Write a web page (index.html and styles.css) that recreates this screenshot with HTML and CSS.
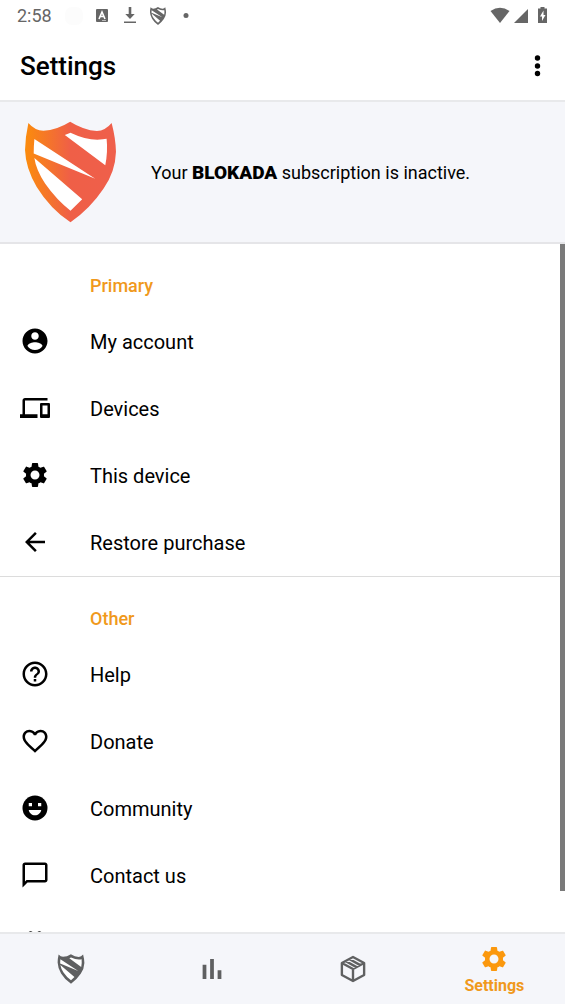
FILE: index.html
```html
<!DOCTYPE html>
<html lang="en">
<head>
<meta charset="utf-8">
<meta name="viewport" content="width=device-width, initial-scale=1">
<title>Settings</title>
<link rel="stylesheet" href="styles.css">
</head>
<body>
<svg class="defs" aria-hidden="true">
  <defs>
    <linearGradient id="flame" x1="0" x2="1" y1="0" y2="0">
      <stop offset="0" stop-color="#fb8c0c"/>
      <stop offset="0.5" stop-color="#ef5f47"/>
      <stop offset="1" stop-color="#ef5f4b"/>
    </linearGradient>
    <symbol id="shield" viewBox="73 63 276 305">
      <path d="M85 69Q105 92 130 92Q170 90 210 65Q250 90 290 93Q315 92 334 69Q346 115 347 155Q345 215 310 265Q270 325 211 366Q150 325 110 260Q77 205 75 150Q76 110 85 69Z"/>
      <path fill="#fff" d="M103 117L285 236L101 160Q101 138 103 117ZM103 174L246 297L211 331Q170 300 135 250Q108 210 103 174ZM194 105L211 98Q255 119 291 119Q310 118 319 116Q323 155 315 195Z"/>
    </symbol>
    <symbol id="gear" viewBox="0 0 24 24">
      <path d="M19.14 12.94c.04-.3.06-.61.06-.94 0-.32-.02-.64-.07-.94l2.03-1.58c.18-.14.23-.41.12-.61l-1.92-3.32c-.12-.22-.37-.29-.59-.22l-2.39.96c-.5-.38-1.03-.7-1.62-.94l-.36-2.54c-.04-.24-.24-.41-.48-.41h-3.84c-.24 0-.43.17-.47.41l-.36 2.54c-.59.24-1.13.57-1.62.94l-2.39-.96c-.22-.08-.47 0-.59.22L2.74 8.87c-.12.21-.08.47.12.61l2.03 1.58c-.05.3-.09.63-.09.94s.02.64.07.94l-2.03 1.58c-.18.14-.23.41-.12.61l1.92 3.32c.12.22.37.29.59.22l2.39-.96c.5.38 1.03.7 1.62.94l.36 2.54c.05.24.24.41.48.41h3.84c.24 0 .44-.17.47-.41l.36-2.54c.59-.24 1.13-.56 1.62-.94l2.39.96c.22.08.47 0 .59-.22l1.92-3.32c.12-.22.07-.47-.12-.61l-2.01-1.58zM12 15.6c-1.98 0-3.6-1.62-3.6-3.6s1.62-3.6 3.6-3.6 3.6 1.62 3.6 3.6-1.62 3.6-3.6 3.6z"/>
    </symbol>
  </defs>
</svg>
<div class="screen">
  <div class="status">
    <div class="status-group">
      <span class="clock">2:58</span>
      <svg class="status-icon faint" viewBox="0 0 18 18"><rect width="18" height="18" rx="7"/></svg>
      <svg class="status-icon" viewBox="0 0 18 18"><rect x="3" y="2" width="12" height="13" rx="1"/><path d="M6 12L9 5L12 12M7 9.500H11" fill="none" stroke="#fff" stroke-width="1.600"/><path d="M9 13.500h4" stroke="#bbb"/></svg>
      <svg class="status-icon" viewBox="0 0 18 18"><path d="M7.700 0h2.600v7h3.400L9 12 4.300 7h3.400zM3 14.500h12V16H3z"/></svg>
      <svg class="status-icon"><use href="#shield"/></svg>
      <svg class="status-icon" viewBox="0 0 18 18"><circle cx="9" cy="8.500" r="2.500"/></svg>
    </div>
    <div class="status-group right">
      <svg class="status-glyph" viewBox="0 0 20 18"><path d="M.5 4Q10-2.500 19.500 4L10 16z"/></svg>
      <svg class="status-glyph" viewBox="0 0 20 18"><path d="M17 2V16H3z"/></svg>
      <svg class="status-glyph" viewBox="0 0 20 18"><path d="M8.500 0h4v1.500H15V16H6V1.500h2.500z"/><path fill="#fff" d="M11.500 3.500L8 9.500h2V14l3.500-6h-2z"/></svg>
    </div>
  </div>
  <header class="topbar">
    <h1>Settings</h1>
    <button class="more" type="button" aria-label="More options"><svg viewBox="0 0 10 22"><circle cx="5" cy="3" r="2.700"/><circle cx="5" cy="11" r="2.700"/><circle cx="5" cy="18.500" r="2.700"/></svg></button>
  </header>
  <section class="banner">
    <svg class="logo" fill="url(#flame)"><use href="#shield"/></svg>
    <p>Your <strong>BLOKADA</strong> subscription is inactive.</p>
  </section>
  <main class="content">
    <section class="group">
      <h2>Primary</h2>
      <a class="row" href="#account"><svg viewBox="0 0 24 24"><path d="M12 2C6.480 2 2 6.480 2 12s4.480 10 10 10 10-4.480 10-10S17.520 2 12 2zm0 3c1.660 0 3 1.340 3 3s-1.340 3-3 3-3-1.340-3-3 1.340-3 3-3zm0 14.200c-2.500 0-4.710-1.280-6-3.220.03-1.990 4-3.080 6-3.080 1.990 0 5.970 1.090 6 3.080-1.290 1.940-3.500 3.220-6 3.220z"/></svg><span>My account</span></a>
      <a class="row" href="#devices"><svg viewBox="0 0 24 24"><path d="M4 6h18V4H4c-1.100 0-2 .9-2 2v11H0v3h14v-3H4V6zm19 2h-6c-.55 0-1 .45-1 1v10c0 .55.45 1 1 1h6c.55 0 1-.45 1-1V9c0-.55-.45-1-1-1zm-1 9h-4v-7h4v7z"/></svg><span>Devices</span></a>
      <a class="row" href="#device"><svg><use href="#gear"/></svg><span>This device</span></a>
      <a class="row" href="#restore"><svg viewBox="0 0 24 24"><path d="M20 11H7.830l5.590-5.590L12 4l-8 8 8 8 1.410-1.410L7.830 13H20v-2z"/></svg><span>Restore purchase</span></a>
    </section>
    <section class="group">
      <h2>Other</h2>
      <a class="row" href="#help"><svg viewBox="0 0 24 24"><path d="M11 18h2v-2h-2v2zm1-16C6.480 2 2 6.480 2 12s4.480 10 10 10 10-4.480 10-10S17.520 2 12 2zm0 18c-4.410 0-8-3.590-8-8s3.590-8 8-8 8 3.590 8 8-3.590 8-8 8zm0-14c-2.210 0-4 1.790-4 4h2c0-1.100.9-2 2-2s2 .9 2 2c0 2-3 1.750-3 5h2c0-2.250 3-2.500 3-5 0-2.210-1.790-4-4-4z"/></svg><span>Help</span></a>
      <a class="row" href="#donate"><svg viewBox="0 0 24 24"><path d="M16.500 3c-1.740 0-3.410.81-4.500 2.090C10.910 3.810 9.240 3 7.500 3 4.420 3 2 5.420 2 8.500c0 3.780 3.400 6.860 8.550 11.540L12 21.350l1.450-1.320C18.600 15.360 22 12.280 22 8.500 22 5.420 19.580 3 16.500 3zm-4.400 15.550l-.1.100-.1-.1C7.140 14.240 4 11.390 4 8.500 4 6.500 5.500 5 7.500 5c1.540 0 3.040.99 3.570 2.360h1.870C13.460 5.990 14.960 5 16.500 5c2 0 3.500 1.500 3.500 3.500 0 2.890-3.140 5.740-7.900 10.050z"/></svg><span>Donate</span></a>
      <a class="row" href="#community"><svg viewBox="0 0 24 24"><circle cx="12" cy="12" r="10"/><path fill="#fff" d="M7 8h2.600v2.600H7zM14.400 8H17v2.600h-2.600zM7 13.500h10c-.5 2.500-2.500 4.300-5 4.300s-4.500-1.800-5-4.300z"/></svg><span>Community</span></a>
      <a class="row" href="#contact"><svg viewBox="0 0 24 24"><path d="M20 2H4c-1.100 0-2 .9-2 2v18l4-4h14c1.100 0 2-.9 2-2V4c0-1.100-.9-2-2-2zm0 14H5.200L4 17.200V4h16v12z"/></svg><span>Contact us</span></a>
      <a class="row" href="#about" aria-label="About"><svg viewBox="0 0 24 24"><path d="M6 8V5Q8.500 1.800 11 5V8zM13 8V5Q15.500 1.800 18 5V8z"/></svg></a>
    </section>
    <div class="scrollbar"></div>
  </main>
  <nav class="tabs" aria-label="Main">
    <a href="#home" aria-label="Home"><svg class="tab-shield"><use href="#shield"/></svg></a>
    <a href="#activity" aria-label="Activity"><svg viewBox="0 0 24 24"><path d="M4.500 8.500h3V20h-3zM10.500 4h3v16h-3zM16.500 13h3v7h-3z"/></svg></a>
    <a href="#packs" aria-label="Packs"><svg viewBox="0 0 24 24" fill="none" stroke="#5f6061" stroke-width="1.900" stroke-linejoin="round"><path d="M12 2.400L20.900 7.200V16.800L12 21.600L3.100 16.800V7.200zM3.100 7.200L12 12L20.900 7.200M12 12V21.600M6 5.600L14.800 10.500M9 4L17.800 8.900"/></svg></a>
    <a class="active" href="#settings" aria-current="page"><svg><use href="#gear"/></svg><span>Settings</span></a>
  </nav>
</div>
</body>
</html>
```
FILE: styles.css
```css
* { box-sizing: border-box; }
body { margin: 0; background: #fff; color: #000; font-family: Roboto, sans-serif; }
h1, h2, p { margin: 0; }
a { color: inherit; text-decoration: none; }
.defs { position: absolute; width: 0; height: 0; }
.screen { display: flex; flex-direction: column; height: 100vh; }

.status { display: flex; justify-content: space-between; padding: 7px 13px 0 17px; height: 32px; color: #666; fill: #666; }
.status-group { display: flex; gap: 10px; }
.status-group.right { gap: 1px; }
.clock { font-size: 18px; line-height: 18px; margin-right: 3px; }
.status-icon { width: 18px; height: 18px; }
.status-icon.faint { fill: #fcfcfc; }
.status-glyph { width: 20px; height: 18px; }

.topbar { display: flex; align-items: center; justify-content: space-between; height: 68px; padding: 0 20px; }
h1 { font-size: 26px; font-weight: 500; line-height: 32px; }
.more { display: flex; padding: 0; border: 0; background: none; }
.more svg { width: 15px; height: 22px; }

.banner { display: flex; align-items: center; gap: 34px; padding: 19px 24px; background: #f5f6fa; border-top: 2px solid #e8e9eb; border-bottom: 2px solid #e5e5e8; }
.logo { flex: none; width: 93px; height: 102px; }
.banner p { padding-top: 2px; font-size: 18px; line-height: 24px; }
.banner strong { font-size: 19px; font-weight: 900; }

.content { position: relative; flex: 1; min-height: 0; overflow: hidden; }
.group { padding-top: 20px; }
.group + .group { border-top: 1px solid #dcdcdc; }
h2 { padding-left: 90px; color: #f0991c; font-size: 18px; font-weight: 500; line-height: 44px; }
.row { display: flex; align-items: center; gap: 40px; height: 67px; padding: 0 20px; font-size: 20px; line-height: 28px; }
.row svg { width: 30px; height: 30px; margin-bottom: 2px; }
.scrollbar { position: absolute; top: 0; right: 0; width: 5px; height: 94%; background: #7a7a7a; }

.tabs { display: grid; grid-template-columns: repeat(4, 1fr); height: 72px; background: #f5f6fa; border-top: 2px solid #e8e9eb; fill: #5f6061; }
.tabs a { display: flex; flex-direction: column; align-items: center; justify-content: center; }
.tabs svg { width: 30px; height: 30px; }
.tabs .active { padding-top: 4px; color: #f0991c; fill: #fb980d; font-size: 16px; font-weight: 700; line-height: 24px; }
```
